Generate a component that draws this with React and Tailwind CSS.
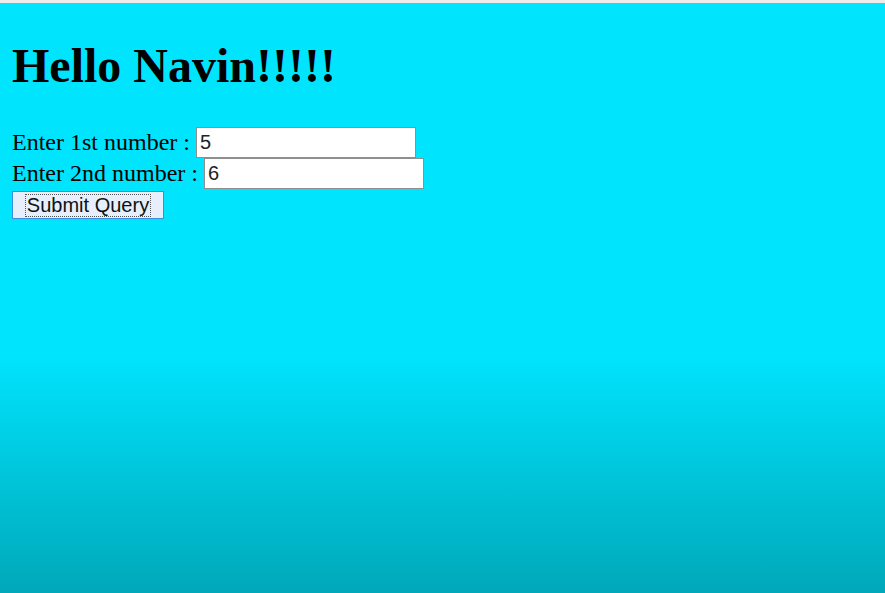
export default function App() {
  return (
    <div className="flex min-h-[593px] w-full flex-col bg-[#00e4fd]">
      {/* browser chrome edge */}
      <div className="h-[3px] w-full bg-[#ececec]" />

      <main className="flex flex-1 flex-col bg-linear-to-b from-[#00e4fd] from-[60%] to-[#00a8b9] px-[12px] font-['Liberation_Serif',serif] text-black">
        <h1 className="mt-[35px] text-[48px] font-bold leading-[56px]">Hello Navin!!!!!</h1>

        <form className="mt-[33px] flex flex-col">
          <div className="flex h-[31px] items-start">
            <span className="mt-[2px] text-[24px] leading-[27px]">Enter 1st number :</span>
            <input
              type="text"
              defaultValue="5"
              className="ml-[6px] h-[31px] w-[220px] border border-[#8f8f8f] bg-white pl-[3px] font-['Liberation_Sans',sans-serif] text-[20px] text-[#222] outline-none"
            />
          </div>
          <div className="flex h-[32px] items-start">
            <span className="mt-[2px] text-[24px] leading-[27px]">Enter 2nd number :</span>
            <input
              type="text"
              defaultValue="6"
              className="ml-[6px] h-[31px] w-[220px] border border-[#8f8f8f] bg-white pl-[3px] font-['Liberation_Sans',sans-serif] text-[20px] text-[#222] outline-none"
            />
          </div>
          <div className="mt-[1px]">
            <button
              type="button"
              className="flex h-[28px] w-[152px] items-center justify-center border border-[#3d8ee0] bg-[#e6effb] p-[2px]"
            >
              <span className="border border-dotted border-[#555] px-px font-['Liberation_Sans',sans-serif] text-[20px] leading-[21px] text-[#111]">
                Submit Query
              </span>
            </button>
          </div>
        </form>
      </main>
    </div>
  );
}
